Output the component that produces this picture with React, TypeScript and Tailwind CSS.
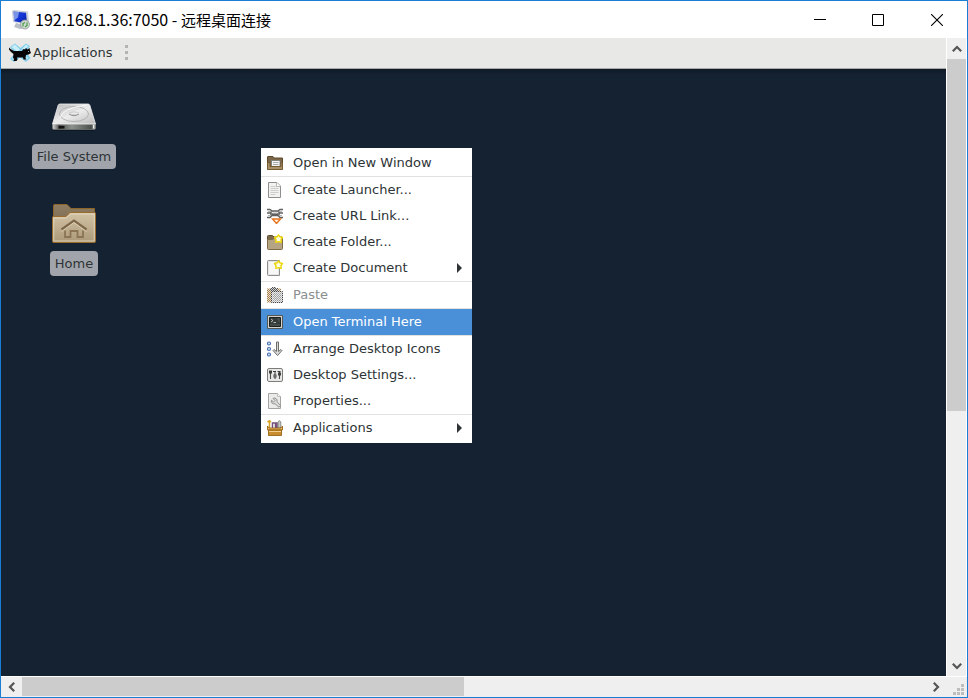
import type { ReactNode } from "react";

type IconProps = { className?: string };

function RemoteDesktopIcon() {
  return (
    <svg viewBox="0 0 20 20" className="size-5 shrink-0" aria-hidden="true">
      <defs>
        <linearGradient id="screen" x1="0" y1="0" x2="1" y2="1">
          <stop offset="0" stopColor="#2a3fc4" />
          <stop offset=".5" stopColor="#1436d8" />
          <stop offset="1" stopColor="#0a1a90" />
        </linearGradient>
      </defs>
      <path d="M6 13l8 2 2 3-6 1-6-2z" fill="#b9bfc6" />
      <path d="M2 1l2-1 14 1.500 1 12-2 1L3 12z" fill="#c9ced6" />
      <path d="M3.500 1.500l12.500 1.300 1 10.700L4.500 11.200z" fill="url(#screen)" />
      <path d="M3.500 1.500l5.500.6-1 5.500-4 3z" fill="#9db8f2" opacity=".7" />
      <circle cx="15" cy="14.500" r="4.500" fill="#d3d8d6" stroke="#8d9693" strokeWidth=".8" />
      <path d="M13 16.500v-3l2-1M17 12.500v3l-2 1.500" fill="none" stroke="#3f9c38" strokeWidth="1.200" />
    </svg>
  );
}

function MouseLogo() {
  return (
    <svg viewBox="0 0 22 20" className="h-5 w-[22px] shrink-0" aria-hidden="true">
      <path d="M1 4l5-3.500 5.500 4.500L17 .5 21 3l-4 6 4.500 6-4.500 4-6-4.500L5 19l-4-3 5-6z" fill="#83cfeb" />
      <path d="M2.500 4L6 1.500l5 5-3 2zM17 1.500L19.500 3.500 15 6.500 13 6z" fill="#c9eef8" />
      <path d="M3 15.500l3-2.500 2 2-3 2.500zM19.500 15l-3-2-2 1.500 2.500 3z" fill="#b4e4f4" />
      <path
        d="M0 4.500L1.500 6l3.500 2h8l1.500-2 1.500.5 1-1.500 1.500 1.500L20.500 5l.5 2.500 1 2.500-2.500 1.500-2.500.5-.5 3 1 1.500h-3l-.5-2H8l.5 2-1 1.500H4.500l.5-2-1-1.500.5-3.500L2 9 0 6.500z"
        fill="#050505"
      />
      <path d="M19 8.500h1" stroke="#a8d9e8" strokeWidth=".8" />
    </svg>
  );
}

function DriveIcon() {
  return (
    <svg viewBox="0 -7 48 48" className="size-12" aria-hidden="true">
      <defs>
        <linearGradient id="driveTop" x1="0" y1="0" x2="1" y2="1">
          <stop offset="0" stopColor="#b8b8b8" />
          <stop offset=".5" stopColor="#ececec" />
          <stop offset="1" stopColor="#bababa" />
        </linearGradient>
        <linearGradient id="driveFront">
          <stop offset="0" stopColor="#d8d8d8" />
          <stop offset=".16" stopColor="#4c504c" />
          <stop offset=".45" stopColor="#8d918d" />
          <stop offset=".9" stopColor="#4d514d" />
          <stop offset="1" stopColor="#c5c8c5" />
        </linearGradient>
      </defs>
      <path d="M3 30h42" stroke="#0b121c" strokeWidth="2" opacity=".6" />
      <path d="M2.500 24h43v4q0 1.500-1.500 1.500H4q-1.500 0-1.500-1.500z" fill="url(#driveFront)" stroke="#777b77" strokeWidth=".7" />
      <path d="M10 4h28q1.300 0 1.800 1.200L45.500 24h-43L8.200 5.200Q8.700 4 10 4z" fill="url(#driveTop)" stroke="#f4f4f4" strokeWidth=".8" />
      <ellipse cx="24" cy="14" rx="14.500" ry="7.500" fill="none" stroke="#aaa" strokeWidth=".8" />
      <path d="M10 18Q12 8 37 5" fill="none" stroke="#fafafa" strokeWidth="1" />
      <path d="M19 14q5 3.500 10 0" fill="#d0d0d0" stroke="#8b8b8b" strokeWidth=".9" />
      <path d="M19 13q5-2.500 10 0" fill="none" stroke="#c2c2c2" strokeWidth=".7" />
      <path d="M8.500 26h6v2.500h-6z" fill="#111" />
      <path d="M43.500 25v3.500" stroke="#eee" strokeWidth="1" />
    </svg>
  );
}

function HomeFolderIcon() {
  return (
    <svg viewBox="0 -3 48 48" className="size-12" aria-hidden="true">
      <defs>
        <linearGradient id="folderFace" x1="0" y1="0" x2="0" y2="1">
          <stop offset="0" stopColor="#d3c3a6" />
          <stop offset="1" stopColor="#ab9978" />
        </linearGradient>
        <linearGradient id="folderBack" x1="0" y1="0" x2="0" y2="1">
          <stop offset="0" stopColor="#8f7d62" />
          <stop offset="1" stopColor="#6f5e45" />
        </linearGradient>
      </defs>
      <path d="M3.500 36V2.500q0-1 1-1H17l4 4h23.500V36z" fill="url(#folderBack)" stroke="#8f6429" />
      <path d="M2.500 14.500q0-1 1-1H16l4-4h24.500q1 0 1 1V38.500q0 1-1 1h-41q-1 0-1-1z" fill="url(#folderFace)" stroke="#9c6c2c" />
      <path d="M3.800 38V15h12.700l4-4h23.700v27z" fill="none" stroke="#e5dac3" strokeWidth=".8" />
      <path d="M11.500 26.500L24 17.500l12.500 9" fill="none" stroke="#7d6748" strokeWidth="2.200" />
      <path d="M15 27.500v6.500h5.500v-6h7v6H33v-6.500" fill="none" stroke="#8b7554" strokeWidth="1.800" />
      <path d="M11.500 28.500L24 19.500l12.500 9" fill="none" stroke="#e5d9c1" strokeWidth=".7" />
    </svg>
  );
}

function MenuIcon({ children }: { children: ReactNode }) {
  return (
    <svg viewBox="0 0 16 16" className="size-4 shrink-0" aria-hidden="true">
      {children}
    </svg>
  );
}

const openFolder = (
  <MenuIcon>
    <path d="M.5 14V2q0-.5.5-.5h5l1 1.500H15.500v11z" fill="#7b664a" stroke="#5f4826" />
    <path d="M4.500 5.500h8.500V12H4.500z" fill="#f4f4f4" stroke="#777" strokeWidth=".8" />
    <path d="M6 7.500h5.500M6 9.500h5.500" stroke="#999" strokeWidth=".8" />
    <path d="M.5 7.500H3V11.500h11V7.500h1.500V14.500H.5z" fill="#a8906b" stroke="#775b31" />
  </MenuIcon>
);

const page = (
  <MenuIcon>
    <path d="M1.500.5h8.500l3.500 3.500v11.500h-12z" fill="#f2f2f1" stroke="#8d8f8a" />
    <path d="M9.500.5V4.500h4" fill="#fff" stroke="#a5a7a3" strokeWidth=".8" />
    <path d="M3.500 4.500h5M3.500 6.500h8M3.500 8.500h8M3.500 10.500h8M3.500 12.500h5" stroke="#cccecb" />
  </MenuIcon>
);

const link = (
  <MenuIcon>
    <path d="M0 1.500h3l2 1.500h6l2-1.500h3M0 5h3l2-1.500M16 5h-3l-2-1.500M0 9.500h3l2-2h6l2 2h3M3 6h10" fill="none" stroke="#5d605c" strokeWidth="1.400" />
    <path d="M1 3.500h3M12 3.500h3M1 7.500h3M12 7.500h3M6 5h4" stroke="#b4b6b3" />
    <path d="M5.500 11h8l-4 4.500z" fill="#fff3e6" stroke="#e8731a" strokeWidth="1.400" />
  </MenuIcon>
);

const star = (
  <path d="M11.500.8l1.400 2 2.600.7-1.500 2.200.2 2.700-2.700-.8-2.700.8.200-2.700L7.500 3.500l2.600-.7z" fill="#fffde0" stroke="#ecd606" strokeWidth="1.400" strokeLinejoin="round" />
);

const newFolder = (
  <MenuIcon>
    <path d="M.5 14V2.500q0-1 1-1h4l1.500 1.500h8V14z" fill="#7d6a4d" stroke="#5f4c2d" />
    <path d="M.5 5.500h5l1.500-1h8.500V14.500q0 1-1 1h-13q-1 0-1-1z" fill="#b5a484" stroke="#806b47" />
    {star}
  </MenuIcon>
);

const newDocument = (
  <MenuIcon>
    <path d="M.5 1.500q0-1 1-1h11V15.500h-11q-1 0-1-1z" fill="#e6e6e5" stroke="#8d8f8a" />
    <path d="M2 2h9v12H2z" fill="#f7f7f7" />
    {star}
  </MenuIcon>
);

const paste = (
  <MenuIcon>
    <defs>
      <pattern id="stipple" width="2" height="2" patternUnits="userSpaceOnUse">
        <path d="M0 0h1v1H0zM1 1h1v1H1z" fill="#fff" opacity=".75" />
      </pattern>
    </defs>
    <path d="M0 1.500h14v14H0z" fill="#a9824b" />
    <path d="M3 1h2V0h4v1h2v3H3z" fill="#555" />
    <path d="M4.500 4.500H15.500V15.500H4.500z" fill="#bbb" stroke="#444" />
    <path d="M6 7h8M6 9h8M6 11h8M6 13h8" stroke="#888" />
    <path d="M0 0h16v16H0z" fill="url(#stipple)" />
  </MenuIcon>
);

const terminal = (
  <MenuIcon>
    <path d="M.5 1.500h15v13H.5z" fill="#d3d3cd" stroke="#555753" />
    <path d="M2.500 3.500h11v9h-11z" fill="#343c3a" stroke="#1c201f" />
    <path d="M4 5l2 1.500L4 8M6.500 8.500H9" fill="none" stroke="#d9dbd7" strokeWidth=".8" />
    <path d="M3 11h10M10 5h3M11 7h2" stroke="#555b58" />
  </MenuIcon>
);

const arrange = (
  <MenuIcon>
    <g fill="#e4edf8" stroke="#4571b0" strokeWidth="1.200">
      <circle cx="2" cy="2.500" r="1.500" />
      <circle cx="2" cy="8" r="1.500" />
      <circle cx="2" cy="13.500" r="1.500" />
    </g>
    <path d="M9.500 1h2v9.500l2.500-2 1 1-4.500 5-4.500-5 1-1 2.500 2z" fill="#d9d9d8" stroke="#6b6e69" strokeWidth="1" />
  </MenuIcon>
);

const settings = (
  <MenuIcon>
    <rect x=".5" y="1.500" width="15" height="13" rx="1.500" fill="#e9e9e7" stroke="#7b7d79" />
    <path d="M3.500 4v8M8 4v8M12.500 4v8" stroke="#4c4f4b" strokeWidth="1.100" />
    <g fill="#fff" stroke="#3c3f3b">
      <rect x="2.500" y="4" width="2" height="2" />
      <rect x="7" y="8" width="2" height="2" />
      <rect x="11.500" y="6" width="2" height="2" />
    </g>
    <path d="M6 4.500h3M10.500 4.500h3" stroke="#3c3f3b" />
  </MenuIcon>
);

const properties = (
  <MenuIcon>
    <path d="M1.500.5h9l3 3v12h-12z" fill="#ebebea" stroke="#a3a5a1" />
    <path d="M10.500.5v3h3" fill="#fff" stroke="#b4b6b2" strokeWidth=".8" />
    <path d="M6 5.500a2.700 2.700 0 0 1 4 3.200l3.500 3.800-1.500 1.800-4-3.600a2.700 2.700 0 0 1-3.500-3.500L6.500 9 8 7.500z" fill="#dededd" stroke="#858783" strokeWidth=".9" />
  </MenuIcon>
);

const toolbox = (
  <MenuIcon>
    <path d="M.5 2L2.500.8l1.500 1M2.500 2v6" fill="none" stroke="#d9a21b" strokeWidth="1.500" />
    <path d="M5.500 8V3h3v5M8.500 3H10v5" fill="none" stroke="#75507b" strokeWidth="1.500" />
    <path d="M11 8V2l1.300-1.500L13.800 2v6z" fill="#c6c8c4" stroke="#777975" strokeWidth=".8" />
    <path d="M.5 6L2 8h12l1.500-2v4H.5z" fill="#e9b96e" stroke="#8f5902" strokeWidth=".8" />
    <path d="M1.500 10h13v5.500h-13z" fill="#c98c2e" stroke="#8f5902" strokeWidth=".8" />
    <path d="M2 11.500h12" stroke="#f3d08d" />
  </MenuIcon>
);

type Item = { label: string; icon: ReactNode; submenu?: boolean; disabled?: boolean; active?: boolean };

const groups: Item[][] = [
  [{ label: "Open in New Window", icon: openFolder }],
  [
    { label: "Create Launcher...", icon: page },
    { label: "Create URL Link...", icon: link },
    { label: "Create Folder...", icon: newFolder },
    { label: "Create Document", icon: newDocument, submenu: true },
  ],
  [{ label: "Paste", icon: paste, disabled: true }],
  [{ label: "Open Terminal Here", icon: terminal, active: true }],
  [
    { label: "Arrange Desktop Icons", icon: arrange },
    { label: "Desktop Settings...", icon: settings },
    { label: "Properties...", icon: properties },
  ],
  [{ label: "Applications", icon: toolbox, submenu: true }],
];

function MenuItem({ item }: { item: Item }) {
  const tone = item.active ? "bg-[#4a90d9] text-white" : item.disabled ? "text-[#8b8e8f]" : "text-[#2e3436]";
  return (
    <button
      type="button"
      role="menuitem"
      disabled={item.disabled}
      aria-haspopup={item.submenu ? "menu" : undefined}
      className={`flex h-[26px] w-full items-center gap-2.5 pr-2.5 pl-1.5 text-left ${tone}`}
    >
      {item.icon}
      <span className="grow whitespace-nowrap">{item.label}</span>
      {item.submenu && (
        <svg viewBox="0 0 5 10" className="h-2.5 w-[5px]" aria-hidden="true">
          <path d="M0 0l5 5-5 5z" fill="#2e3436" />
        </svg>
      )}
    </button>
  );
}

function ContextMenu() {
  return (
    <div role="menu" className="absolute top-[110px] left-[260px] w-[211px] divide-y divide-[#e1e1e0] bg-white py-0.5">
      {groups.map((group) => (
        <div key={group[0].label} role="group">
          {group.map((item) => (
            <MenuItem key={item.label} item={item} />
          ))}
        </div>
      ))}
    </div>
  );
}

function DesktopIcon({ label, children }: { label: string; children: ReactNode }) {
  return (
    <button type="button" className="flex flex-col items-center gap-[3px]">
      {children}
      <span className="rounded bg-[#a1a5ab] px-[5px] py-[3px] leading-[19px] text-[#2e3436]">{label}</span>
    </button>
  );
}

function Chevron({ className = "" }: IconProps) {
  return (
    <svg viewBox="0 0 10 8" className={`h-2 w-2.5 ${className}`} aria-hidden="true">
      <path d="M.8 6.200L5 2l4.200 4.200" fill="none" stroke="#555" strokeWidth="2.200" />
    </svg>
  );
}

export default function App() {
  return (
    <div className="flex h-screen flex-col border border-[#1a7fd4] bg-white font-['DejaVu_Sans',sans-serif] text-[13px]">
      <header className="flex h-[37px] shrink-0 items-center pl-[9px] text-black">
        <RemoteDesktopIcon />
        <h1 className="ml-[5px] font-['Noto_Sans_CJK_SC',sans-serif] text-base whitespace-pre">
          192.168.1.36:7050 - <span className="text-[15px]">远程桌面连接</span>
        </h1>
        <div className="ml-auto flex h-full">
          <button type="button" aria-label="Minimize" className="grid w-[58px] place-items-center">
            <svg viewBox="0 0 12 12" className="size-3">
              <path d="M0 5.500h12" stroke="#000" />
            </svg>
          </button>
          <button type="button" aria-label="Maximize" className="grid w-[58px] place-items-center">
            <svg viewBox="0 0 12 12" className="size-3">
              <path d="M.5.5h11v11H.5z" fill="none" stroke="#000" />
            </svg>
          </button>
          <button type="button" aria-label="Close" className="grid w-[60px] place-items-center">
            <svg viewBox="0 0 12 12" className="size-3">
              <path d="M0 0l12 12M12 0L0 12" stroke="#000" strokeWidth="1.100" />
            </svg>
          </button>
        </div>
      </header>

      <div className="flex min-h-0 grow">
        <main className="relative flex min-w-0 grow flex-col bg-[#152232]">
          <nav className="flex h-[31px] shrink-0 items-center border-b border-[#a8a8a5] bg-[#e8e8e6] pl-2 text-[#2e3436]">
            <button type="button" className="flex items-center gap-0.5">
              <MouseLogo />
              <span>Applications</span>
            </button>
            <svg viewBox="0 0 3 16" className="ml-[13px] h-4 w-[3px]" aria-hidden="true">
              <path d="M0 0h3v3H0zM0 6h3v3H0zM0 12h3v3H0z" fill="#b4b4b2" />
            </svg>
          </nav>
          <div className="h-1.5 shrink-0 bg-linear-to-b from-[#101a27] to-[#152232]" />
          <div className="flex w-[146px] flex-col items-center gap-[31px] pt-[18px]">
            <DesktopIcon label="File System">
              <DriveIcon />
            </DesktopIcon>
            <DesktopIcon label="Home">
              <HomeFolderIcon />
            </DesktopIcon>
          </div>
          <ContextMenu />
        </main>

        <div role="scrollbar" aria-label="Vertical" aria-controls="root" aria-valuenow={0} aria-orientation="vertical" className="ml-px mr-px flex w-[19px] shrink-0 flex-col bg-[#efefef]">
          <button type="button" aria-label="Scroll up" className="grid h-[21px] shrink-0 place-items-center">
            <Chevron />
          </button>
          <div className="grow">
            <div className="h-[59%] bg-[#cccccc]" />
          </div>
          <button type="button" aria-label="Scroll down" className="grid h-[21px] shrink-0 place-items-center">
            <Chevron className="rotate-180" />
          </button>
        </div>
      </div>

      <div className="flex h-[21px] shrink-0 border-y border-white border-b-[#efefef] bg-[#efefef]">
        <div role="scrollbar" aria-label="Horizontal" aria-controls="root" aria-valuenow={0} aria-orientation="horizontal" className="flex grow">
          <button type="button" aria-label="Scroll left" className="grid w-[21px] shrink-0 place-items-center">
            <Chevron className="-rotate-90" />
          </button>
          <div className="flex grow">
            <div className="w-[49%] bg-[#cccccc]" />
          </div>
          <button type="button" aria-label="Scroll right" className="grid w-[21px] shrink-0 place-items-center">
            <Chevron className="rotate-90" />
          </button>
        </div>
        <div className="flex w-[21px] items-end justify-end pr-[3px] pb-px">
          <svg viewBox="0 0 11 11" className="size-[11px]" aria-hidden="true">
            <path d="M8 0h3v3H8zM4 4h3v3H4zM8 4h3v3H8zM0 8h3v3H0zM4 8h3v3H4zM8 8h3v3H8z" fill="#bdbdbd" />
          </svg>
        </div>
      </div>
    </div>
  );
}
